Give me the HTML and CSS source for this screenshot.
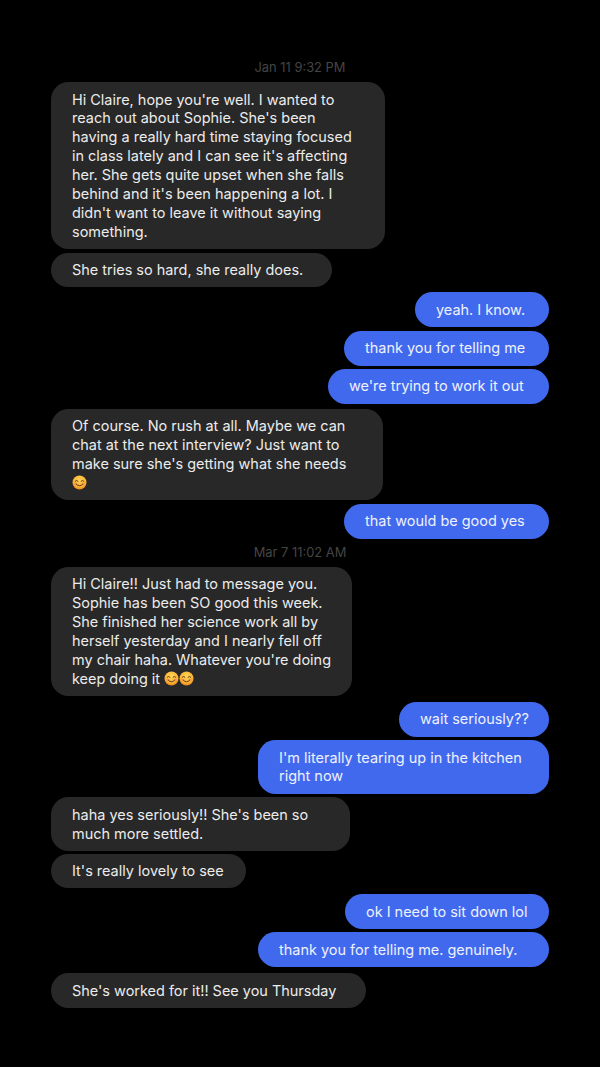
FILE: index.html
```html
<!DOCTYPE html>
<html lang="en">
<head>
<meta charset="utf-8">
<title>Messages</title>
<link rel="stylesheet" href="styles.css">
</head>
<body>
<svg class="defs" width="0" height="0" aria-hidden="true">
  <defs>
    <radialGradient id="face" cx="50%" cy="35%" r="65%">
      <stop offset="0" stop-color="#ffd65a"/>
      <stop offset="0.7" stop-color="#f9b233"/>
      <stop offset="1" stop-color="#e8871e"/>
    </radialGradient>
    <symbol id="smile" viewBox="0 0 16 16">
      <circle cx="8" cy="8" r="7.5" fill="url(#face)"/>
      <ellipse cx="4" cy="9.6" rx="2" ry="1.3" fill="#f58a5c" opacity=".6"/>
      <ellipse cx="12" cy="9.6" rx="2" ry="1.3" fill="#f58a5c" opacity=".6"/>
      <path d="M3.4 6.6Q5 4.9 6.4 6.6M9.6 6.6Q11 4.9 12.6 6.6" fill="none" stroke="#5b3312" stroke-width="1" stroke-linecap="round"/>
      <path d="M4.4 9.6Q8 13.6 11.6 9.6" fill="none" stroke="#5b3312" stroke-width="1" stroke-linecap="round"/>
    </symbol>
  </defs>
</svg>
<main class="thread">
  <time class="stamp stamp-first">Jan 11 9:32 PM</time>
  <p class="bubble in w-334">Hi Claire, hope you're well. I wanted to<br>reach out about Sophie. She's been<br>having a really hard time staying focused<br>in class lately and I can see it's affecting<br>her. She gets quite upset when she falls<br>behind and it's been happening a lot. I<br>didn't want to leave it without saying<br>something.</p>
  <p class="bubble in w-281">She tries so hard, she really does.</p>
  <p class="bubble out group w-134">yeah. I know.</p>
  <p class="bubble out w-205">thank you for telling me</p>
  <p class="bubble out w-221">we're trying to work it out</p>
  <p class="bubble in group w-332">Of course. No rush at all. Maybe we can<br>chat at the next interview? Just want to<br>make sure she's getting what she needs<br><svg class="emoji"><use href="#smile"/></svg></p>
  <p class="bubble out w-205">that would be good yes</p>
  <time class="stamp stamp-second">Mar 7 11:02 AM</time>
  <p class="bubble in w-301">Hi Claire!! Just had to message you.<br>Sophie has been SO good this week.<br>She finished her science work all by<br>herself yesterday and I nearly fell off<br>my chair haha. Whatever you're doing<br>keep doing it <svg class="emoji"><use href="#smile"/></svg><svg class="emoji"><use href="#smile"/></svg></p>
  <p class="bubble out group-wide w-150">wait seriously??</p>
  <p class="bubble out w-291">I'm literally tearing up in the kitchen<br>right now</p>
  <p class="bubble in w-299">haha yes seriously!! She's been so<br>much more settled.</p>
  <p class="bubble in tight w-195">It's really lovely to see</p>
  <p class="bubble out group-wide w-204">ok I need to sit down lol</p>
  <p class="bubble out w-291">thank you for telling me. genuinely.</p>
  <p class="bubble in group-wide w-315">She's worked for it!! See you Thursday</p>
</main>
</body>
</html>
```
FILE: styles.css
```css
* { box-sizing: border-box; }
html, body { margin: 0; padding: 0; background: #000; }
body { height: 1067px; overflow: hidden; font-family: Inter, "Liberation Sans", sans-serif; }
.defs { display: block; height: 0; }
.thread { display: flex; flex-direction: column; padding: 0 51px; }
.stamp { align-self: center; font-size: 12.9px; line-height: 18px; color: #454545; }
.stamp-first { margin: 59px 0 5px 0; }
.stamp-second { margin: 5px 0 5px 0; }
.bubble { margin: 3.3px 0 0; padding: 8.5px 0 7.5px 21px; font-size: 14.46px; line-height: 18.9px; border-radius: 17.5px; color: #ececec; white-space: nowrap; }
.in { align-self: flex-start; background: #282828; }
.out { align-self: flex-end; background: #4169ee; color: #eef1fd; }
.group { margin-top: 5px; }
.group-wide { margin-top: 5.8px; }
.tight { margin-top: 2.6px; }
.stamp + .bubble { margin-top: 0; }
.emoji { display: inline-block; width: 15px; height: 15px; vertical-align: -2px; }
.w-134 { width: 134px; } .w-150 { width: 150px; } .w-195 { width: 195px; } .w-204 { width: 204px; }
.w-205 { width: 205px; } .w-221 { width: 221px; } .w-281 { width: 281px; } .w-291 { width: 291px; }
.w-299 { width: 299px; } .w-301 { width: 301px; } .w-315 { width: 315px; } .w-332 { width: 332px; } .w-334 { width: 334px; }
```
